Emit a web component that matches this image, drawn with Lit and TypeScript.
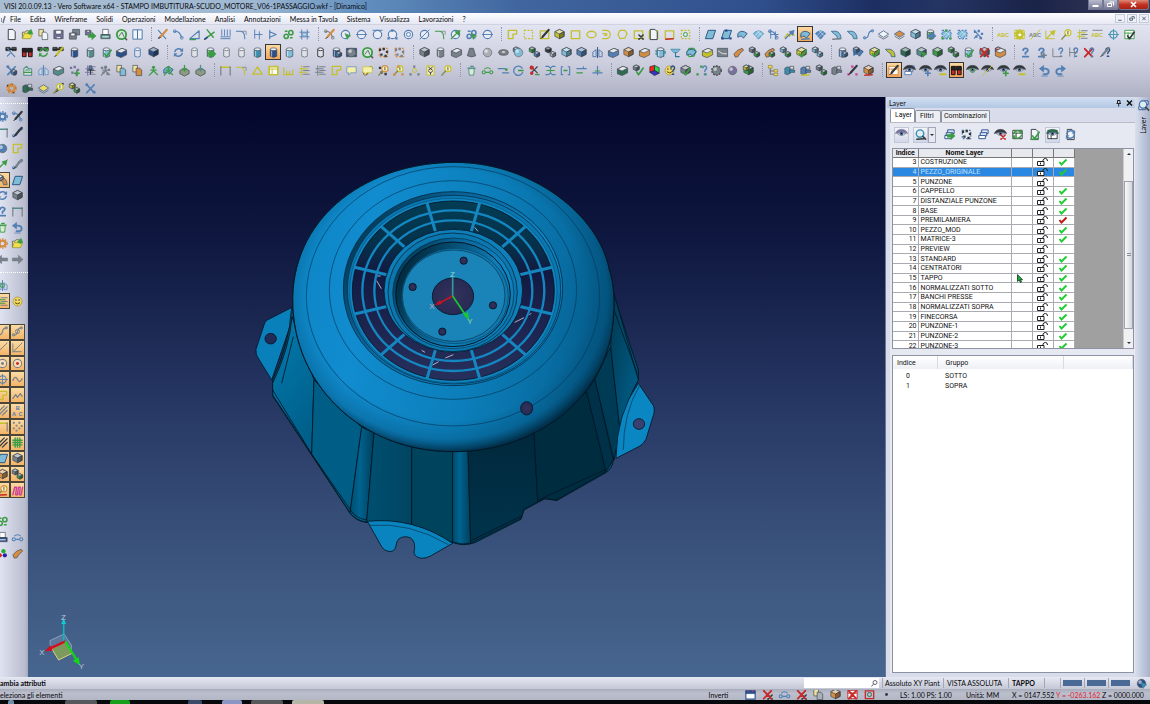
import { LitElement, html, css, svg, nothing } from "lit";
import { customElement, property } from "lit/decorators.js";
import { classMap } from "lit/directives/class-map.js";
import { styleMap } from "lit/directives/style-map.js";

/* ---------- icon vocabulary: "shape/colour" layers joined by "+" ---------- */

const INK: Record<string, string> = {
  b: "#527fb4", B: "#2b4f8a", g: "#3c9c46", G: "#2f6b50", y: "#c3c02c", Y: "#efdc66",
  k: "#33383d", s: "#78818a", S: "#a9b0b6", o: "#d58d42", r: "#c62a2a", c: "#7fbcd8",
  C: "#3a8fae", w: "#f2f5f8", p: "#77719c", t: "#548c88", m: "#cc3f9a",
};

type Draw = (c: string) => unknown;
const line = (d: string, c: string, w = 1.2) =>
  svg`<path d=${d} fill="none" stroke=${c} stroke-width=${w} stroke-linecap="round" stroke-linejoin="round"/>`;
const area = (d: string, f: string, c = "#3c4650", w = 0.7) =>
  svg`<path d=${d} fill=${f} stroke=${c} stroke-width=${w} stroke-linejoin="round"/>`;
const prism = (x: number, y: number, r: number, c: string) => svg`
  ${area(`M${x} ${y}l${r} ${r / 2}v${r}l${-r} ${r / 2}l${-r} ${-r / 2}v${-r}z`, c)}
  ${area(`M${x} ${y}l${r} ${r / 2}l${-r} ${r / 2}l${-r} ${-r / 2}z`, "rgba(255,255,255,.55)")}
  ${area(`M${x} ${y + r}l${r} ${-r / 2}v${r}l${-r} ${r / 2}z`, "rgba(0,0,0,.35)")}`;

const SHAPES: Record<string, Draw> = {
  doc: (c) => area("M3.5 1.5h5l2.500 2.500V12.5h-7.500z", c, "#333a42", 1),
  docs: (c) => svg`${area("M2 1.500h5v7H2z", "#f3e39a")}${area("M5.500 4.500h4l2 2v6h-6z", c)}`,
  folder: (c) => svg`${area("M1.500 11V4.500h3l1-1.500h4v2", "#f6e27a")}${area("M1.500 11.500l2-5.500h9l-2.500 5.500z", "#f1e04e", "#8a8a2a")}${area("M7 5l4-3.500 1.500 4.500-3 1z", c, c)}`,
  floppy: (c) => svg`${area("M2 2.500h10v9H2z", c)}${area("M4 2.500h6v4H4z", "#fff")}${area("M4.500 9h5v2.500h-5z", "#dde")}`,
  disk2: (c) => svg`${area("M5 1.500h7.500v6H5z", c)}${area("M1.500 5.500H9v6.500H1.500z", c)}${area("M3 5.500h4.500v3H3z", "#fff")}`,
  disks: (c) => svg`${area("M1.500 2.500h6v5h-6z", c)}${area("M3 2.500h3v2H3z", "#fff")}`,
  sendR: (c) => area("M4.500 7h4V4.500L13 8.500l-4.500 4V10h-4z", c, c),
  print: (c) => svg`${area("M4 1.500h6V7H4z", "#fff")}${area("M2 7h10v4.500H2z", c)}${line("M4 9.500h6", "#fff", 1)}`,
  lens: (c) => svg`<circle cx="6.500" cy="6" r="4" fill="#dfeef2" stroke=${c} stroke-width="1.500"/>${line("M9.500 9l3 3", "#444", 1.8)}`,
  globe: (c) => svg`<circle cx="7" cy="7" r="5" fill="#d6e8da" stroke=${c} stroke-width="2"/>${line("M4.500 8.500l3-4 2 4.500", "#5a6a70", 1)}${line("M11 11l1.500 1.500", "#555", 1.6)}`,
  book: (c) => svg`${area("M2 2h5v10H2zM7 2h5v10H7z", c, "#4a73a8", 1)}`,
  pencil: (c) => svg`${line("M11.500 2L5 9.500", c, 2.4)}${line("M4.500 10L3 11.500", "#222", 1)}`,
  cross2: (c) => line("M2.500 2.500l8 9M2.500 11l3-3", c, 1.2),
  tools: (c) => svg`${line("M3 3l8 8.500M11 3l-8 8.500", c, 1.8)}<circle cx="3" cy="3" r="1.600" fill=${c}/><circle cx="11" cy="11" r="1.500" fill=${c}/>`,
  arcn: (c) => svg`${line("M2.500 4c5-1 6 2 8 6", c)}<circle cx="3" cy="3.500" r="1.500" fill="none" stroke=${c}/><circle cx="10.500" cy="10.500" r="1.500" fill="none" stroke=${c}/>`,
  tri: (c) => svg`${line("M2 11.500h10V3z", c)}${line("M2 12.500h6", "#35a040", 1.2)}`,
  tri2: (c) => line("M2 11h10L7 3z", c, 1.4),
  arrow: (c) => svg`${line("M2.500 11.500L9 5", c, 1.4)}${area("M12 2.500L10.500 8 6.500 4z", c, c)}`,
  cline: (c) => svg`${line("M2 12L12 4.500M4.500 2l6.500 8", c, 1.5)}${line("M2 12l2.500-2", "#2b4f8a", 1.8)}`,
  arrowR: (c) => svg`${line("M1.500 7h7", c, 1.4)}${area("M8.500 3.500L12.500 7l-4 3.500z", c, c)}`,
  bigL: (c) => area("M1 7l5-4.500V5.500h6.500v3H6v3z", c, c),
  bigR: (c) => area("M13 7L8 2.500V5.500H1.500v3H8v3z", c, c),
  comb: (c) => line("M2 11.500h10M2 9.500h10M3 2v6M6 2v6M9 2v6M12 2v6", c, 1),
  corner: (c) => svg`${line("M1.500 3.500H6q4.500 0 4.500 8", c)}${line("M8 3.500h4V7", "#78818a", 0.8)}`,
  para: (c) => line("M4 2v9M9 4v8M4 7h8", c, 1),
  play: (c) => line("M4 2.500v9M4 4l7 3-7 3", c, 1.2),
  chain: (c) => svg`<g fill="none" stroke=${c} stroke-width="1.700"><circle cx="4.500" cy="9" r="2.300"/><circle cx="9.500" cy="5" r="2.300"/><path d="M3 3.500h3M8.500 10.500h3"/></g>`,
  hatch: (c) => svg`${line("M4 2v10M10 2v10M2 4.500h10M2 9.500h10", c, 1)}${area("M5 5.500h4v3H5z", "#cfe0ee", c)}`,
  circ: (c) => svg`<circle cx="7" cy="7" r="4.500" fill="rgba(255,255,255,.4)" stroke=${c} stroke-width="1.200"/>`,
  circS: (c) => svg`<circle cx="7" cy="7" r="2.200" fill="none" stroke=${c}/>`,
  mid: (c) => line("M1.500 7h11", c, 1),
  top: (c) => line("M2 2.500h10", c, 1),
  slash: (c) => line("M2 12L12 2", c, 1),
  dot: (c) => svg`<circle cx="7" cy="7" r="1.600" fill=${c}/>`,
  nodes: (c) => svg`<g fill=${c}><path d="M1.500 10h2.500v2.500H1.500zM10 10h2.500v2.500H10zM5.500 1.500h2.500v2.500H5.500z"/></g>`,
  sq: (c) => line("M2.500 3h9v8.500h-9z", c, 1.4),
  notch: (c) => line("M2.500 2.500h9v4H7.500v5h-5z", c, 1.4),
  dash: (c) => svg`<rect x="2.500" y="2.500" width="9" height="9" fill="none" stroke=${c} stroke-width="1.300" stroke-dasharray="2 1.500"/>`,
  oval: (c) => svg`<ellipse cx="7" cy="7" rx="5" ry="3.500" fill="none" stroke=${c} stroke-width="1.400"/>`,
  dee: (c) => line("M3 2.500h3.500a4 4 0 010 9H3M3 6h3.500a1 1 0 010 2H5", c, 1.3),
  hex: (c) => line("M4.500 2.500h5L12 6l-2.500 5-5 .500L2 7z", c, 1.3),
  sheet: (c) => area("M4.500 2.500h8l-3 9h-8z", c, "#24507e", 1),
  wave: (c) => area("M2 6q4-5 10 0l-4 5q-2-4-6-1z", c, "#24507e", 0.9),
  fan: (c) => svg`${area("M1.500 6Q7 0 12.500 6L7 12z", c, "#3e84b8", 0.8)}${line("M3.500 8l5-5M5.500 10l5-5M10.500 8l-5-5", "#e4f2fa", 0.7)}`,
  bend: (c) => svg`${area("M1.500 3.500h5q5 1 5.500 8h-4q0-4-3-4.500z", c, "#3d6688", 0.9)}`,
  scurve: (c) => svg`${line("M2.500 11q4 0 4.500-4T11.500 3", c, 1.3)}<circle cx="2.800" cy="10.500" r="1.300" fill="none" stroke=${c}/><circle cx="11.200" cy="3" r="1.300" fill="none" stroke=${c}/>`,
  wiggle: (c) => line("M2 8q2.500-6 5-1t5-1", c, 1.4),
  zig: (c) => line("M2 10l3-4 2 3 3-4 2 3", c, 1.4),
  diam: (c) => svg`${area("M7 3l5.500 3.500L7 10 1.500 6.500z", c, "#48688c", 0.9)}${line("M2 9l5 3 5-3", "#6a7682", 1)}`,
  cube: (c) => prism(7, 1.5, 5, c),
  cubeS: (c) => prism(9.5, 6, 3, c),
  cubeT: (c) => prism(4.5, 1, 3.2, c),
  cyl: (c) => svg`${area("M3.500 3.500v7.500q3.500 2.500 7 0v-7.500z", c)}<path d="M5 4.500v7" stroke="rgba(255,255,255,.6)"/><ellipse cx="7" cy="3.500" rx="3.500" ry="1.500" fill="#e8eef4" stroke="#3c4650" stroke-width=".7"/>`,
  cylo: (c) => svg`<path d="M4 3.500v7.500q3 2 6 0v-7.500" fill="#dfe3e9" stroke=${c}/><ellipse cx="7" cy="3.500" rx="3" ry="1.500" fill="#f1f3f6" stroke=${c}/>`,
  cone: (c) => area("M5 2.500h4l2.500 8q-4.500 2.500-9 0z", c),
  ball: (c) => svg`<circle cx="7" cy="7" r="4.600" fill=${c} stroke="#555" stroke-width=".6"/><circle cx="5.500" cy="5.500" r="2" fill="#fff" opacity=".55"/>`,
  torus: (c) => svg`<ellipse cx="7" cy="7" rx="5.200" ry="3" fill=${c} stroke="#444" stroke-width=".7"/><ellipse cx="7" cy="6.500" rx="2" ry=".8" fill="#eee"/>`,
  glass: (c) => svg`${area("M1 1.500h4.500v3.500H1zM7.500 1.500H12v3.500H7.500z", c, "#222", 0.9)}${line("M1.500 3.500h10", "#222", 1.6)}`,
  bino: (c) => svg`${area("M1.500 3H5.500v8.500h-4zM8 3h4v8.500H8z", c, "#111", 1)}${area("M1.500 2.500h10.500v4H1.500z", "#222", "#111")}`,
  plus: (c) => line("M9.500 7.500v5M7 10h5", c, 1.8),
  minus: (c) => line("M6.500 11h6", c, 2),
  ex: (c) => line("M3 3l8 8.500M11 3l-8 8.500", c, 2),
  exS: (c) => line("M7.500 7.500l4.500 4.500M12 7.500L7.500 12", c, 1.6),
  check: (c) => line("M5 8.500l2 3 5-7", c, 1.8),
  tip: (c) => area("M6.500 6l6 2.500-2.500.8-1 3z", c, c),
  under: (c) => line("M3 12l8-.500", c, 1.6),
  refresh: (c) => svg`${line("M11 5A4.500 4.500 0 003 6M3 9a4.500 4.500 0 008-1", c, 1.6)}${area("M11.800 2.500V6H8.500zM2.200 11.500V8h3.300z", c, c, 0.3)}`,
  gear: (c) => svg`<circle cx="7" cy="7" r="3.200" fill="none" stroke=${c} stroke-width="2.400"/><circle cx="7" cy="7" r="5" fill="none" stroke=${c} stroke-width="1.500" stroke-dasharray="1.700 1.500"/>`,
  pic: (c) => svg`${area("M1.500 2.500h11v9h-11z", c)}${line("M2.500 5.500q4 4 9 3", "#f0f0f0", 0.9)}`,
  block: (c) => svg`${area("M1.500 5.500l6-3 5 2v5l-6 3-5-2z", c)}${area("M1.500 5.500l6-3 5 2-6 3z", "#e6e8ea")}`,
  hand: (c) => area("M2 8.500l4-4 5-2 1.500 2-4 3.500-2 3.500-3 .5z", c),
  flag: (c) => svg`${area("M2 3.500h10l-3 3.500H5z", c, "#2a7a9a")}${line("M7 7v4.500h4", "#2a7a9a")}`,
  quest: (c) => svg`${line("M4.500 4.500a2.500 2 0 115 0q0 1.500-2.500 2.500v1.500", c, 2)}${line("M4 11.500h6", c, 1.8)}`,
  axes: (c) => line("M2 3v8.500h9", c, 1),
  mirror: (c) => svg`${line("M7 1.500v11", c, 1)}${area("M5.500 4L2 6.500v5h3.500zM8.500 4L12 6.500v5H8.500z", "#c7d6e4", c)}`,
  house: (c) => svg`${area("M3 12V5l3-2.500L8 5h3.500v7z", "#d3dde4", c, 1.1)}${line("M3 9h8M5 6.500h4", "#3c9c46", 1.2)}`,
  bits: (c) => svg`<g fill=${c}><path d="M2 3h2.500v2.500H2zM6 2h2.500v2.500H6zM9.500 5H12v2.500H9.500zM3.500 8H6v2.500H3.500zM8 9.500h2.500V12H8z"/></g>`,
  person: (c) => svg`<circle cx="7" cy="3.500" r="1.700" fill=${c}/>${line("M2.500 12L7 7.500l4.500 4M4 6.500h6M7 5v3", c, 1.3)}`,
  crate: (c) => svg`${area("M2 7l5-2.500L12 7v3.500L7 13l-5-2.500z", "#8d9a86", "#39443a")}${line("M7 1.500V7M5 5l2 2.500L9 5", c, 1.4)}`,
  dim: (c) => svg`${line("M2 3.500h10", c, 1.4)}${line("M2 3v9M12 3v9", "#5f6a72", 1)}`,
  rule: (c) => line("M2 4v7.500h10M5 11V8M8 11V8M11.500 11V6", c, 1.2),
  lines: (c) => svg`${line("M6 3h6M6 7h6M6 11h6", "#78818a", 1.2)}${line("M4 2v10M2 5h8M1.500 9h8", c, 1.1)}`,
  note: (c) => svg`${area("M2 3h10v6.500H6L4 12V9.500H2z", "#f4efab", c)}`,
  tag: (c) => svg`${area("M3 2h8v10H3z", "#eeeac0", c, 1)}${line("M5 3.500l4 3M9 3.500l-4 3M5 8l2 1.500L9 8M7 9.500V11", "#333", 1)}`,
  abc: (c) => svg`<text x="0" y="10" font-family="Liberation Sans" font-weight="700" font-size="6" fill=${c}>ABC</text>`,
  keyhole: (c) => svg`<circle cx="8.500" cy="5" r="3.300" fill="#f5f0b4" stroke=${c} stroke-width="1.200"/>${line("M6 7.500l-4 4.500", "#8a8a4a", 1.5)}${line("M8.500 3.500v3", "#555", 1)}`,
  target: (c) => svg`<circle cx="7" cy="7" r="4" fill="none" stroke=${c} stroke-width="1.200"/>${line("M7 1.500v11M1.500 7h11", c, 0.9)}`,
  can: (c) => svg`${area("M4 5h6l-.6 7H4.600z", "#d8ecd8", c, 1)}${line("M3 4.500h8M6 2.500h3", c, 1.2)}`,
  links: (c) => svg`<g fill="none" stroke=${c} stroke-width="1.200"><circle cx="3" cy="9" r="1.700"/><circle cx="11" cy="9" r="1.700"/><path d="M3.500 5.500q3.500-3 7 0M5 9h4"/></g>`,
  dashes: (c) => svg`${line("M1.500 5h7M6 9.5h6.500", c, 1.4)}<circle cx="10" cy="6" r="1.500" fill="#3c9c46"/>`,
  clock: (c) => svg`${line("M11 4.500A5 5 0 1011.500 9", c, 1.400)}${line("M7 7h5", "#3c9c46", 1.4)}`,
  cut: (c) => svg`${line("M3 2.500l7 7M10 3L4 9", "#444", 1.3)}<circle cx="4" cy="4" r="2.300" fill=${c}/><circle cx="4" cy="10" r="1.800" fill=${c}/>${line("M8 11.500h4", "#3c9c46", 1.3)}`,
  press: (c) => svg`${line("M2 2.500h3l2 2 2-2h3M2 11.500h3l2-2 2 2h3", c, 1.2)}${line("M3 7h8M7 5v4", "#3c9c46", 1.2)}`,
  gate: (c) => svg`${line("M2.500 3v8.500M11.500 3v8.500M2.500 3h1.500M10 3h1.500M2.500 11.500H4M10 11.500h1.500", c)}${line("M5.500 7h3", "#3c9c46", 1.8)}`,
  split: (c) => svg`${line("M2 5h10M9 3v2", c, 1.2)}${line("M2 9.500h6", "#3c9c46", 1.3)}`,
  post: (c) => svg`${line("M2 9.500h10M7 2.500v9", c, 1.2)}${line("M4.500 7.500h5", "#3c9c46", 1.2)}`,
  face: (c) => svg`<circle cx="7" cy="7" r="4.800" fill=${c} stroke="#a07b10" stroke-width=".6"/><circle cx="5.300" cy="5.500" r=".8" fill="#333"/><circle cx="8.700" cy="5.500" r=".8" fill="#333"/>${line("M4.500 8.500q2.500 2.500 5 0", "#5a3b00", 1)}`,
  questS: (c) => svg`${line("M8.500 4a2 2 0 113.500 1.500q-1.500 1-1.500 2.500", c, 1.5)}${line("M10 11h1.500", c, 1.5)}`,
  rgb: () => svg`<circle cx="4" cy="9" r="2.300" fill="#d22"/><circle cx="9.500" cy="9" r="2.300" fill="#22a"/><circle cx="8" cy="4.500" r="2.300" fill="#2a3"/>`,
  rainbow: () => svg`${area("M2 3l5-1.500V7l-5 2z", "#f22", "#222")}${area("M7 1.500L12 4v6L7 7z", "#2d4", "#222")}${area("M2 9l5-2 5 3-5 2.500z", "#33c", "#222")}`,
  tree: (c) => svg`${line("M3.500 4v7h4M3.500 7.500h4", "#666", 1)}${area("M1.500 1.500h4v3h-4zM7.500 6h4v2.500h-4zM7.500 10h4v2.500h-4z", c, "#8a7a2a")}`,
  valve: (c) => svg`${area("M2 4.500l3-1.500 3 1v6l-3 1.500-3-1z", c)}${area("M7.500 2.500h4v3h-4z", "#d8dde2")}${area("M7 6.500h5.500v2.500H7z", c)}`,
  eye: (c) => svg`${area("M.500 6Q2 1.500 7 1.500T13.500 6Q11 4.500 7 4.500T.500 6z", c, c)}${area("M2.500 6q4.500-2.500 9 0-4.500 4-9 0z", "#eef2f8", "#555", 0.6)}<circle cx="7" cy="6" r="2" fill="#46699a"/><circle cx="7" cy="6" r=".8" fill="#111"/>`,
  undo: (c) => svg`${line("M6 11h3q2.500-.5 2.500-3T8 5H5.500", c, 2)}${area("M6 1.500v7L1.500 5z", c, c)}${line("M4 13h6", c, 0.8)}`,
  redo: (c) => svg`${line("M8 11H5Q2.500 10.500 2.500 8t3.500-3h2.500", c, 2)}${area("M8 1.500v7L12.500 5z", c, c)}${line("M4 13h6", c, 0.8)}`,
  diag: (c) => line("M2 9l7-7M3 12l9-9M7 12l5-5", c, 1.3),
  pts: (c) => svg`<g fill=${c}><path d="M2 2h2v2H2zM8 2h2v2H8zM5 5h2v2H5zM10.500 5.500h2v2h-2zM2 8h2v2H2zM8 8h2v2H8zM5 10.500h2v2H5z"/></g>`,
  mesh: (c) => svg`${line("M2 4.500h10M2 7h10M2 9.500h10M4.500 2v10M7 2v10M9.500 2v10", c, 1.5)}`,
  coil: (c) => line("M2 11.500l2-8h2l-1 8h2l1-8h2l-1 8h2l1.500-8", c, 1.5),
  letters: (c) => svg`<g font-family="Liberation Sans" font-weight="700" font-size="6" fill=${c}><text x="5" y="6">B</text><text x="1" y="12.500">A</text><text x="8" y="12.500">C</text></g>`,
  cell: (c) => svg`${area("M2 2.500h10v9H2z", "#fdfdfd", c, 1)}${line("M2 5.500h10M5.500 5.500v6", c, 1)}`,
  cal: (c) => svg`${area("M2 3h10v9H2z", "#fdfdfd", c, 1.2)}${area("M2 3h10v3H2z", c, c)}${line("M4.500 1.500v2M9.500 1.500v2", "#c0476a", 1.2)}`,
  pin: (c) => svg`${area("M5.500 2h3v4.500h-3z", c)}${line("M4 6.500h6M7 6.500V11", "#333", 1)}`,
  stack: (c) => svg`${area("M5 2h7v4H5z", "#dfe6ff", c, 1)}${area("M3.500 5h7v3.500h-7z", "#dfe6ff", c, 1)}${area("M2 8h7v3.500H2z", "#fff", c, 1)}`,
};

const drawIcon = (code: string) => svg`${code.split("+").map((part) => {
  const [name, ink] = part.split("/");
  const draw = SHAPES[name];
  return draw ? draw(INK[ink] ?? INK.s) : nothing;
})}`;

@customElement("tool-icon")
class ToolIcon extends LitElement {
  static styles = css`
    :host { display: inline-flex; width: 13px; height: 13px; flex: none; }
    svg { width: 13px; height: 13px; display: block; }
  `;
  @property() code = "";
  render() {
    return html`<svg viewBox="0 0 14 14" aria-hidden="true">${drawIcon(this.code)}</svg>`;
  }
}

/* ---------- toolbar data; a leading "!" marks a pressed tool ---------- */

const TOOLBARS: string[][] = [
  [
    "doc/w folder/g docs/w floppy/p disk2/s disks/p+sendR/g print/t globe/g book/w",
    "cross2/b+pencil/o arcn/b tri/b cline/g comb/b corner/b para/b play/b chain/g hatch/b",
    "arcn/s+pencil/o circ/b+tip/g circ/b+mid/b circ/b+top/b circ/b+nodes/b circ/b+circS/b circ/b+slash/b corner/g circ/b+arrow/g chain/b+tip/g circ/b+mid/b",
    "notch/y dash/y sq/y+pencil/k cube/y sq/y oval/y dee/y hex/y sq/y+exS/k sq/y+doc/w sq/y+under/r dash/y+circS/g",
    "sheet/c sheet/c+nodes/B wave/c fan/c para/b+arcn/b zig/y+arrow/b !wave/c+under/b fan/b bend/c+under/s bend/c scurve/b diam/w diam/o cube/c cyl/g+sendR/b dash/b+fan/c+nodes/g dash/b+fan/c bits/b+cross2/b",
    "abc/y cell/y+gear/y abc/s+slash/y axes/y+arrow/y keyhole/y lines/y abc/y+top/s target/C cell/g+check/k",
  ],
  [
    "glass/s+cross2/b bino/r glass/s+refresh/g glass/s+pencil/y cyl/B cyl/t cyl/c+check/g block/B cylo/b cube/B",
    "refresh/b cylo/s cyl/g+sendR/g cylo/s cylo/s cyl/C !cyl/B cyl/c cylo/s cylo/k cyl/B+cubeS/b pic/B+ball/s globe/g dash/o+bits/k dash/o+bits/s",
    "cube/s cyl/s block/s cone/s ball/S torus/s cubeT/b+ball/c cubeT/g+cubeS/b cubeT/k+cubeS/S cube/c cube/b mirror/B block/b cube/o block/o gear/C+cyl/c flag/c hex/g+wave/c block/y pic/s hand/o cubeT/s+cubeS/g hand/o+cubeS/g cubeT/c+cubeS/g cube/y+check/g cubeT/c+cubeS/c",
    "cyl/b+cubeS/b wave/b+cubeT/b cube/y+check/g bend/y cube/G cube/t+tip/g cube/g cubeT/g+cubeS/g cyl/c+check/g cube/s+ex/r cubeT/r+block/o",
    "quest/b quest/b+plus/s questS/b+axes/s questS/b+para/s ex/r+questS/b questS/B+pencil/s",
  ],
  [
    "tools/b+cubeS/b house/t mirror/b block/t bits/p+plus/g lines/p+pin/b bits/s+person/s docs/c docs/o person/g wave/c+person/g crate/g crate/t",
    "dim/y corner/y tri2/y cell/y+sq/y rule/y lines/y lines/s notch/y note/b hand/o+note/y bits/k+keyhole/o keyhole/y+nodes/o circS/y+nodes/s tag/y keyhole/y",
    "can/t links/g dashes/b clock/b cut/r press/b gate/b split/b post/b",
    "block/G cubeT/s+check/g rainbow/k face/Y+questS/B cube/s+check/g nodes/g+questS/b gear/k+ball/s ball/p cube/g+cubeT/y",
    "tree/Y valve/C valve/b+under/y cubeT/s+cubeS/g valve/s nodes/m+pencil/k cube/o+under/r",
    "!cell/o+pencil/k stack/b+eye/k eye/k+plus/b eye/k+minus/y !bino/r eye/k+circS/g eye/k+slash/y eye/k+plus/g eye/k+minus/y",
    "undo/b redo/b",
  ],
  ["bits/k+gear/o valve/G diam/Y pencil/k+keyhole/y cubeT/y+cubeS/g tools/b"],
];

const PITCH = 15.7;

@customElement("tool-strip")
class ToolStrip extends LitElement {
  static styles = css`
    :host { display: flex; height: 18px; padding-left: 4px; min-width: 0; }
    .group { display: flex; justify-content: space-between; flex: none; }
    .sep { flex: none; width: 10px; display: flex; justify-content: center; padding-left: 3px; box-sizing: border-box; }
    .sep i { width: 0; border-left: 1px dotted #8f96a8; margin: 2px 0; }
    button { flex: 1 1 0; min-width: 0; display: flex; align-items: center; justify-content: center;
      padding: 0; border: 1px solid transparent; background: none; height: 16px; margin-top: 1px; }
    .on { background: linear-gradient(#fbd9a0, #f2a65a); border-color: #33363c; }
  `;
  @property({ attribute: false }) groups: string[] = [];
  render() {
    return this.groups.map((g, gi) => {
      const items = g.split(" ");
      return html`${gi ? html`<span class="sep"><i></i></span>` : nothing}
        <div class="group" role="toolbar" style=${styleMap({ width: `${Math.round(items.length * PITCH)}px` })}>
          ${items.map((c, i) => html`<button class=${classMap({ on: c[0] === "!" })} aria-label=${`Comando ${gi + 1}.${i + 1}`}>
            <tool-icon code=${c.replace("!", "")}></tool-icon></button>`)}
        </div>`;
    });
  }
}

/* ---------- left palette: pairs of tools, "-" leaves a slot blank ---------- */

const PALETTE: { items: string[]; framed?: boolean; cls: string }[] = [
  { cls: "first", items: ["gear/b arcn/b+pencil/k", "dim/t scurve/b+pencil/k", "ball/b notch/y", "slash/r+arrow/g scurve/b+pencil/s",
      "!bend/o+cubeT/w sheet/c", "refresh/b cube/s", "quest/b dim/t", "can/g undo/b", "gear/o folder/g", "bigL/s bigR/s"] },
  { cls: "second", items: ["mirror/b+circS/g -", "!lines/g face/Y"] },
  { cls: "third", framed: true, items: ["scurve/s circS/s+scurve/s", "slash/s axes/s+slash/s", "circ/s+dot/s circ/s+dot/r", "target/b wiggle/s", "notch/y zig/s",
      "diag/s letters/b", "dim/y pts/s", "diag/k mesh/g", "sheet/c cube/s", "cube/o cubeT/s+cubeS/g", "keyhole/o+under/r coil/m"] },
  { cls: "fourth", items: ["chain/g -", "print/B links/b", "rgb/k hand/o"] },
];

@customElement("side-palette")
class SidePalette extends LitElement {
  static styles = css`
    :host { display: flex; flex-direction: column; width: 28px; flex: none; overflow: hidden;
      background: linear-gradient(90deg, #dfe2f0, #b9bccd 90%, #a6a9bc); }
    .block { display: grid; grid-template-columns: 15px 15px; justify-content: end; padding-right: 3px; }
    .first { height: 158px; margin-top: 6px; padding-top: 5px; border-top: 1px dotted #fff; }
    .second { height: 32px; border-top: 1px dotted #fff; margin-top: 5px; padding-top: 4px; }
    .third { height: 174px; margin-top: 15px; }
    .fourth { height: 48px; margin-top: 15px; }
    button { padding: 0; min-height: 0; min-width: 0; display: flex; align-items: center; justify-content: center;
      border: 1px solid transparent; background: none; overflow: hidden; }
    .on { background: linear-gradient(#fbdba4, #f3b468); border-color: #4c4638; }
  `;
  render() {
    return PALETTE.map((b) => html`<div class="block ${b.cls}" role="toolbar">
      ${b.items.flatMap((row) => row.split(" ")).map((c, i) => c === "-" ? html`<span></span>` :
        html`<button class=${classMap({ on: !!b.framed || c[0] === "!" })} aria-label=${`Attributo ${i + 1}`}>
          <tool-icon code=${c.replace("!", "")}></tool-icon></button>`)}
    </div>`);
  }
}

/* ---------- 3D scene ---------- */

const SPOKES = Array.from({ length: 12 }, (_, i) => {
  const a = ((15 + i * 30) * Math.PI) / 180;
  return `M${Math.round(640 + 200 * Math.cos(a))} ${Math.round(422 + 178 * Math.sin(a))}L${Math.round(640 + 306 * Math.cos(a))} ${Math.round(422 + 272 * Math.sin(a))}`;
}).join("");

@customElement("model-view")
class ModelView extends LitElement {
  static styles = css`
    :host { display: block; flex: 1 1 0; min-width: 0; overflow: hidden;
      background: linear-gradient(#03052a, #0f1840 25%, #243460 50%, #385079 75%, #47668f); }
    svg { display: block; width: 100%; height: 100%; font-family: "Liberation Sans", sans-serif; }
  `;
  render() {
    return html`<svg viewBox="28 97 857 580" role="img" aria-label="Scudo motore">
      <defs>
        <linearGradient id="dome" x1="0" y1="0.5" x2="1" y2="0.65">
          <stop offset="0" stop-color="#0d86c6"/><stop offset=".2" stop-color="#118ccf"/><stop offset=".55" stop-color="#0c7fbb"/><stop offset=".8" stop-color="#086ea4"/><stop offset="1" stop-color="#045580"/>
        </linearGradient>
        <radialGradient id="edge" cx=".48" cy=".46" r=".54">
          <stop offset=".8" stop-color="#013a58" stop-opacity="0"/><stop offset=".92" stop-color="#01456a" stop-opacity=".3"/><stop offset="1" stop-color="#012a42" stop-opacity=".9"/>
        </radialGradient>
        <linearGradient id="slot" x1="0" y1="0" x2="0" y2="1">
          <stop offset="0" stop-color="#023d54"/><stop offset=".25" stop-color="#06304a"/><stop offset=".4" stop-color="#131a42"/><stop offset="1" stop-color="#272f5c"/>
        </linearGradient>
        <linearGradient id="ring" x1="0" y1=".2" x2="1" y2=".8">
          <stop offset="0" stop-color="#02324a"/><stop offset=".3" stop-color="#0a6296"/><stop offset=".7" stop-color="#1286c4"/><stop offset="1" stop-color="#0b78b2"/>
        </linearGradient>
        <linearGradient id="well" x1="0" y1=".2" x2="1" y2=".7">
          <stop offset="0" stop-color="#01202f"/><stop offset=".3" stop-color="#05496c"/><stop offset=".7" stop-color="#0f7fba"/><stop offset="1" stop-color="#0d74ac"/>
        </linearGradient>
        <linearGradient id="side" x1="0" y1="0" x2=".4" y2="1"><stop offset="0" stop-color="#037bb0"/><stop offset="1" stop-color="#00608b"/></linearGradient>
        <linearGradient id="front" x1="0" y1="0" x2="1" y2="0"><stop offset="0" stop-color="#004f70"/><stop offset="1" stop-color="#004562"/></linearGradient>
        <linearGradient id="rib" x1="0" y1="0" x2="1" y2="0"><stop offset="0" stop-color="#004c6e"/><stop offset=".4" stop-color="#006390"/><stop offset="1" stop-color="#003f5b"/></linearGradient>
        <linearGradient id="right" x1="0" y1="0" x2="0" y2="1"><stop offset="0" stop-color="#01283c"/><stop offset="1" stop-color="#00344b"/></linearGradient>
        <linearGradient id="rear" x1="0" y1="0" x2="1" y2="1"><stop offset="0" stop-color="#023850"/><stop offset="1" stop-color="#00638f"/></linearGradient>
        <radialGradient id="pierce"><stop offset="0" stop-color="#33335c"/><stop offset="1" stop-color="#282a54"/></radialGradient>
      </defs>
      <g transform="translate(240 150) scale(.33333)" stroke="#021624" stroke-width="2.500" stroke-linejoin="round">
        <path d="M154 473L82 510Q75 514 73 522L48 598Q47 610 52 620L95 690L160 500Z" fill="#0a80bb"/>
        <path d="M154 480Q148 580 98 690V738L330 1090Q350 1115 380 1117L640 1178Q670 1190 705 1178L843 1108L852 1080L915 1046L950 1052L1098 968Q1118 955 1120 930L1150 820Q1165 740 1195 690V660L1120 430L640 400Z" fill="#00506f"/>
        <path d="M156 500Q150 590 98 700V735L215 912L222 690Z" fill="url(#side)"/>
        <path d="M222 690L215 912L330 1088L365 832Z" fill="#005e86"/>
        <path d="M365 832L330 1088Q345 1110 380 1117L402 848Z" fill="url(#rib)"/>
        <path d="M402 848L380 1115Q450 1118 515 1142V888Z" fill="url(#front)"/>
        <path d="M515 888V1142Q580 1152 638 1178V900Z" fill="#00435d"/>
        <path d="M638 900V1176Q665 1186 692 1180L684 896Z" fill="url(#rib)"/>
        <path d="M684 896L692 1180L843 1106L852 1078L893 1055L882 848Z" fill="url(#right)"/>
        <path d="M882 848L893 1055L915 1046L950 1050L1098 965L1040 725Z" fill="#002c40"/>
        <path d="M1040 725L1098 965L1120 930L1065 688Z" fill="#003149"/>
        <path d="M1065 688L1122 930L1140 840L1112 590Z" fill="#003b56"/>
        <path d="M1112 590L1140 840Q1155 760 1195 690L1122 430Z" fill="url(#rear)"/>
        <path d="M98 720L215 912L335 1085Q350 1105 380 1110M692 1172L845 1098M895 1050L1098 958M125 700L160 560M1122 480L1192 672" fill="none"/>
        <path d="M1195 700L1241 768Q1244 778 1242 790L1218 868Q1212 880 1200 888L1128 925Q1130 790 1195 700Z" fill="#0a86c2"/>
        <path d="M1150 900Q1150 790 1198 708" fill="none" stroke-width="1.500"/>
        <path d="M382 1114Q520 1100 638 1180L570 1219Q545 1230 530 1220Q518 1212 524 1196Q526 1162 498 1160Q470 1160 468 1188Q464 1208 444 1204Q432 1200 426 1192Z" fill="#0a84be"/>
        <path d="M390 1126Q510 1116 625 1184" fill="none" stroke-width="1.500"/>
        <ellipse cx="92" cy="566" rx="17" ry="16" fill="#222a58"/>
        <ellipse cx="1197" cy="822" rx="17" ry="16" fill="#3a4170"/>

        <path d="M158 440C165 190 390 37 645 37C880 37 1080 200 1108 360C1122 400 1124 450 1121 490C1114 730 900 905 640 905C380 905 190 730 162 510Q157 475 158 440Z" fill="url(#dome)"/>
        <path d="M158 440C165 190 390 37 645 37C880 37 1080 200 1108 360C1122 400 1124 450 1121 490C1114 730 900 905 640 905C380 905 190 730 162 510Q157 475 158 440Z" fill="url(#edge)"/>
        <g fill="none" stroke="#03385a" stroke-width="2">
          <ellipse cx="639" cy="439" rx="440" ry="389"/><ellipse cx="639" cy="420" rx="371" ry="328"/>
        </g>
        <ellipse cx="639" cy="416" rx="329" ry="291" fill="url(#ring)" stroke="#032c46"/>
        <ellipse cx="642" cy="419" rx="320" ry="283" fill="#0a77b0" stroke="#033453"/>
        <ellipse cx="640" cy="422" rx="311" ry="277" fill="#1184c0" stroke="#03466b" stroke-width="1.500"/>
        <ellipse cx="640" cy="422" rx="303" ry="269" fill="url(#slot)"/>
        <g fill="none" stroke="#1486c0" stroke-width="7">
          <ellipse cx="640" cy="422" rx="273" ry="241"/><ellipse cx="640" cy="422" rx="237" ry="211"/>
          <path d=${SPOKES} stroke-width="9"/>
        </g>
        <ellipse cx="640" cy="422" rx="208" ry="184" fill="#0f7fba"/>
        <ellipse cx="638" cy="427" rx="194" ry="178" fill="#0c77af" stroke-width="2"/>
        <ellipse cx="640" cy="430" rx="182" ry="166" fill="url(#ring)" stroke="#02304a" stroke-width="2"/>
        <ellipse cx="639" cy="433" rx="172" ry="157" fill="url(#well)" stroke-width="3"/>
        <ellipse cx="645" cy="438" rx="160" ry="143" fill="#1178ae" stroke="#02304a" stroke-width="1.500"/>
        <ellipse cx="641" cy="437" rx="154" ry="137" fill="#1a84b8" stroke-width="1.500"/>
        <g fill="url(#pierce)">
          <ellipse cx="639" cy="439" rx="62" ry="55"/>
          <circle cx="671" cy="332" r="11"/><circle cx="518" cy="411" r="11"/><circle cx="759" cy="466" r="11"/><circle cx="607" cy="545" r="11"/>
          <ellipse cx="860" cy="775" rx="18" ry="20"/>
        </g>
        <path d="M412 378h10M410 392l14 24M704 232l10 12M824 517l28-14M868 494l6-4M545 601l10 6M578 645l18-10M616 624l24-10" stroke="#c9cdd8" fill="none"/>
        <path d="M638 438V374" stroke="#2f9c9c" stroke-width="5"/>
        <path d="M638 438L600 458" stroke="#c01424" stroke-width="5"/><path d="M584 466L600 450L606 462Z" fill="#c01424" stroke="none"/>
        <path d="M638 438L680 500" stroke="#19c832" stroke-width="5"/><path d="M688 512L670 494L684 486Z" fill="#19c832" stroke="none"/>
        <g fill="#8fd0dc" stroke="none" font-size="24"><text x="630" y="380">Z</text><text x="568" y="478" fill="#c9a4b8">X</text><text x="682" y="522" fill="#9ad4b0">Y</text></g>
      </g>
      <g transform="translate(0 600) scale(.33333)">
        <path d="M150 122L192 102L214 135V158L152 150Z" fill="#8fa0bc" fill-opacity=".35" stroke="#9aa9c4" stroke-width="2.500"/>
        <path d="M155 146L196 126L216 160L176 180Z" fill="#7d9a5e" stroke="#d9d27a" stroke-width="3"/>
        <path d="M191 125V66" stroke="#10b4bc" stroke-width="5"/><path d="M191 54L184 72H198Z" fill="#12ccd0"/>
        <path d="M196 124L150 146" stroke="#d01020" stroke-width="7"/><path d="M134 154L152 136L158 152Z" fill="#d01020"/>
        <path d="M196 124L230 180" stroke="#12d41c" stroke-width="7"/><path d="M240 196L218 182L236 172Z" fill="#12d41c"/>
        <g fill="#b9c4d6" font-size="24"><text x="183" y="60">Z</text><text x="118" y="165">X</text><text x="236" y="208">Y</text></g>
      </g>
    </svg>`;
  }
}

/* ---------- layer panel ---------- */

const LAYERS: [number, string, string][] = [
  [3, "COSTRUZIONE", "g"], [4, "PEZZO_ORIGINALE", "g"], [5, "PUNZONE", ""], [6, "CAPPELLO", "g"], [7, "DISTANZIALE PUNZONE", "g"],
  [8, "BASE", "g"], [9, "PREMILAMIERA", "r"], [10, "PEZZO_MOD", "g"], [11, "MATRICE-3", "g"], [12, "PREVIEW", ""], [13, "STANDARD", "g"],
  [14, "CENTRATORI", "g"], [15, "TAPPO", "g"], [16, "NORMALIZZATI SOTTO", "g"], [17, "BANCHI PRESSE", "g"],
  [18, "NORMALIZZATI SOPRA", "g"], [19, "FINECORSA", "g"], [20, "PUNZONE-1", "g"], [21, "PUNZONE-2", "g"], [22, "PUNZONE-3", "g"],
];

@customElement("layer-panel")
class LayerPanel extends LitElement {
  static styles = css`
    :host { display: flex; flex-direction: column; width: 251px; flex: none; box-sizing: border-box; padding: 1px 1px 4px 4px;
      background: #d9dcea; border-left: 1px solid #6d7790; font: 7px/9px Roboto, "Liberation Sans", sans-serif; color: #111; }
    .caption { display: flex; align-items: center; height: 10px; margin: 0 0 0 -3px; padding: 0 2px; gap: 4px;
      background: linear-gradient(#cddcf0, #b4c8e4); font: 7px/9px Lato, sans-serif; }
    .caption span { flex: 1; }
    .caption button { width: 7px; height: 8px; padding: 0; border: 0; background: none; display: flex; }
    .caption svg { width: 7px; height: 8px; }
    .tabs { display: flex; align-items: flex-end; height: 14px; border-bottom: 1px solid #b9bcc6; }
    .tabs button { font: inherit; color: inherit; height: 12px; padding: 0 4px; border: 1px solid #8d92a2; border-bottom: 0;
      border-radius: 2px 2px 0 0; background: #eceef4; text-align: left; }
    .tabs .t0 { height: 14px; width: 25px; background: #fff; }
    .tabs .t1 { width: 26px; }
    .tabs .t2 { padding: 0 2px; }
    .body { flex: 1; min-height: 0; display: flex; flex-direction: column; background: #e6e8f2; padding: 0 1px 0 2px; }
    .bar { display: flex; align-items: center; height: 23px; flex: none; padding: 0 2px; gap: 4px; margin-bottom: 2px; }
    .bar button { padding: 0; width: 13px; height: 16px; display: flex; align-items: center; justify-content: center; border: 0; background: none; }
    .bar .raised { background: linear-gradient(#f3f5fb, #d2d8e8); border: 1px solid #c3c8d8; width: 15px; box-sizing: border-box; }
    .bar .drop { width: 8px; margin-left: -4px; margin-right: 3px; border: 1px solid #a3a8b8; box-sizing: border-box; }
    .tablebox { display: flex; height: 201px; flex: none; overflow: hidden; background: #a0a0a0; border: 1px solid #8d92a2; box-sizing: border-box; }
    .scroll { flex: 1; overflow: hidden; }
    table { border-collapse: collapse; table-layout: fixed; width: 181px; height: 202px; background: #fff; }
    th, td { padding: 0; border: 1px solid #a9abb0; border-width: 0 1px 1px 0; overflow: hidden; white-space: nowrap; line-height: 8px; height: 8px; }
    th { background: #e8e9ee; font-weight: 700; font-size: 7px; border-color: #777; }
    td:first-child { text-align: right; padding-right: 1px; }
    td:nth-child(2) { padding-left: 2px; }
    .sel td { background: #2a88e2; color: #bfe0ff; }
    .ic { text-align: center; }
    .ic svg { display: block; margin: 0 auto; width: 11px; height: 8px; }
    .pick { position: relative; overflow: visible; }
    .cursor { position: absolute; left: 5px; top: 0; width: 6px; height: 9px; }
    .sb { width: 10px; flex: none; display: flex; flex-direction: column; background: #f0f0f2; border-left: 1px solid #c8cad2; box-sizing: border-box; }
    .sb button { border: 0; padding: 0; height: 10px; width: 100%; background: #eef0f4; display: flex; align-items: center; justify-content: center; }
    .track { flex: 1; padding-top: 22px; padding-bottom: 9px; }
    .thumb { height: 100%; box-sizing: border-box; border: 1px solid #9da2ac; background: linear-gradient(90deg, #fafafa, #d4d6dc); display: flex; align-items: center; justify-content: center; }
    .tri { width: 0; height: 0; border: 2px solid transparent; }
    .dn { border-top-color: #333; margin-top: 2px; }
    .up { border-bottom-color: #333; margin-bottom: 2px; }
    .grip { width: 4px; height: 4px; background: repeating-linear-gradient(#8a8f9a 0 1px, transparent 1px 2px); }
    .list { flex: 1; min-height: 0; margin-top: 6px; background: #fff; border: 1px solid #8d92a2; }
    .list table { width: 100%; height: auto; }
    .list th { text-align: left; font-weight: 400; border: 0; border-right: 1px solid #d8dae2; height: 13px; background: linear-gradient(#fff, #eef0f5); padding-left: 4px; }
    .list td { border: 0; height: 10px; line-height: 10px; }
    .list td:first-child { text-align: left; padding-left: 13px; }
    .list th:nth-child(2), .list td:nth-child(2) { padding-left: 8px; }
    .list tbody::before { content: ""; display: block; height: 2px; }
  `;
  lock() {
    return html`<svg viewBox="0 0 11 8"><path d="M.500 3.500h6.500v4H.500z" fill="#fff" stroke="#222"/><path d="M3.500 4.500v2" stroke="#222"/><path d="M6 3.500V2q.500-1.500 2.500-1.500T10.500 3" fill="none" stroke="#222"/></svg>`;
  }
  tick(k: string) {
    return k ? html`<svg viewBox="0 0 11 8"><path d="M1.500 4l2 2.500L8.500 1.500" fill="none" stroke=${k === "g" ? "#22cc33" : "#c01818"} stroke-width="2"/></svg>` : nothing;
  }
  cursor() {
    return html`<svg class="cursor" viewBox="0 0 6 9"><path d="M.500.500v7l1.700-1.500L3.500 8.500l1-.5-1-2.300h2z" fill="#1fa83a" stroke="#0d3b16" stroke-width=".8"/></svg>`;
  }
  render() {
    const tools = ["stack/B+sendR/g", "dash/b+bits/k", "stack/B", "eye/k+exS/r", "cell/k+refresh/g", "doc/w+under/g+check/g"];
    return html`
      <div class="caption"><span>Layer</span>
        <button aria-label="Blocca"><svg viewBox="0 0 7 8"><path d="M2.500 1.500h2.500v3h-2.500zM1.500 4.500h4.500M3.700 5v2.500" fill="none" stroke="#222"/></svg></button>
        <button aria-label="Chiudi"><svg viewBox="0 0 7 8"><path d="M1 1.500l5 5M6 1.500l-5 5" stroke="#111" stroke-width="1.500"/></svg></button></div>
      <div class="tabs" role="tablist"><button role="tab" class="t0" aria-selected="true">Layer</button><button role="tab" class="t1">Filtri</button><button role="tab" class="t2">Combinazioni</button></div>
      <div class="body">
        <div class="bar" role="toolbar">
          <button class="raised" aria-label="Visibilità"><tool-icon code="eye/p"></tool-icon></button>
          <button class="raised" aria-label="Cerca"><tool-icon code="lens/C+under/k"></tool-icon></button>
          <button class="drop" aria-label="Opzioni di ricerca"><span class="tri dn"></span></button>
          ${tools.map((t, i) => html`<button aria-label=${`Layer ${i + 1}`}><tool-icon code=${t}></tool-icon></button>`)}
          <button class="raised" aria-label="Mostra"><tool-icon code="cell/k+eye/G"></tool-icon></button>
          <button aria-label="Aggiorna"><tool-icon code="doc/w+refresh/b"></tool-icon></button>
        </div>
        <div class="tablebox">
          <div class="scroll"><table>
            <colgroup><col width="25"><col width="93"><col width="21"><col width="21"><col width="21"></colgroup>
            <thead><tr><th>Indice</th><th>Nome Layer</th><th></th><th></th><th></th></tr></thead>
            <tbody>${LAYERS.map(([n, name, k]) => html`<tr class=${classMap({ sel: n === 4 })}>
              <td>${n}</td><td>${name}</td><td class="pick">${n === 15 ? this.cursor() : nothing}</td><td class="ic">${this.lock()}</td><td class="ic">${this.tick(k)}</td></tr>`)}</tbody>
          </table></div>
          <div class="sb"><button aria-label="Su"><span class="tri up"></span></button>
            <div class="track"><div class="thumb"><span class="grip"></span></div></div>
            <button aria-label="Giù"><span class="tri dn"></span></button></div>
        </div>
        <div class="list"><table>
          <colgroup><col width="44"><col width="126"><col></colgroup>
          <thead><tr><th>Indice</th><th>Gruppo</th><th></th></tr></thead>
          <tbody><tr><td>0</td><td>SOTTO</td><td></td></tr><tr><td>1</td><td>SOPRA</td><td></td></tr></tbody>
        </table></div>
      </div>`;
  }
}

/* ---------- application frame ---------- */

const MENU = ["File", "Edita", "Wireframe", "Solidi", "Operazioni", "Modellazione", "Analisi", "Annotazioni", "Messa in Tavola", "Sistema", "Visualizza", "Lavorazioni", "?"];

@customElement("app-root")
class AppRoot extends LitElement {
  static styles = css`
    :host { display: flex; flex-direction: column; height: 100vh; overflow: hidden; background: #c3c6d6;
      font: 7px/10px Lato, "Open Sans", sans-serif; color: #08090c; }
    .title { display: flex; height: 13px; flex: none; align-items: flex-start; padding-left: 4px;
      background: linear-gradient(90deg, #a8bdd2, #9fb8d2 22%, #5f8dbd 32%, #41669f 45%, #2f4f8c 66%, #1d2f62 76%, #243463 82%, #1a2348 90%, #3a3c58); }
    .title h1 { flex: 1; margin: 0; font: inherit; line-height: 13px; white-space: nowrap; }
    .title button { height: 10px; padding: 0; border: 1px solid #737791; border-top: 0; background: linear-gradient(#b9bccb, #77799a); display: flex; align-items: center; justify-content: center; width: 15px; }
    .title .close { width: 31px; background: linear-gradient(#e08a78, #c23322 50%, #a82014); margin-right: 1px; border-radius: 0 0 3px 3px; }
    .title svg, .mdi svg { width: 9px; height: 7px; }
    .menu { display: flex; align-items: center; height: 12px; flex: none; padding-left: 1px; background: linear-gradient(#fdfdff, #e6e8f3); border-bottom: 1px solid #d0d3e0; box-sizing: border-box; }
    .menu .app { width: 9px; height: 10px; }
    .menu nav { display: flex; flex: 1; gap: 9px; }
    .menu a { color: inherit; text-decoration: none; white-space: nowrap; }
    .mdi { display: flex; gap: 2px; padding-right: 1px; }
    .mdi button { width: 10px; height: 9px; padding: 0; border: 1px solid #c4cad8; background: #eef2f8; display: flex; align-items: center; justify-content: center; }
    .bars { flex: none; height: 72px; background: linear-gradient(#e2e4f1, #cbcddd 55%, #aeb1c3); }
    .main { flex: 1; min-height: 0; display: flex; }
    .dock { flex: 1 0 14px; max-width: 14px; display: flex; flex-direction: column; align-items: center; background: linear-gradient(90deg, #d4dcec, #a9b2ca); padding-top: 2px; gap: 5px; }
    .dock span { writing-mode: vertical-rl; line-height: 9px; transform: rotate(180deg); }
    .status { display: flex; height: 12px; flex: none; align-items: center; padding-right: 2px; background: linear-gradient(#e6e8f2, #c4c7d4); }
    .status b, .hint span { flex: 1; white-space: nowrap; overflow: hidden; }
    .find { width: 75px; height: 10px; box-sizing: border-box; display: flex; background: #fff; align-items: center; padding-right: 1px; margin-right: 3px; }
    .find input { flex: 1; min-width: 0; border: 0; outline: 0; padding: 0; font: inherit; height: 9px; background: none; }
    .find svg { width: 7px; height: 8px; }
    .cell { height: 10px; box-sizing: border-box; white-space: nowrap; overflow: hidden; border-left: 1px solid #a3a7b8; padding-left: 2px; }
    .c1 { width: 61px; } .c2 { width: 65px; padding-left: 3px; } .c3 { width: 36px; padding-left: 3px; font-weight: 700; } .c4 { width: 16px; }
    .sw { width: 24px; height: 10px; box-sizing: border-box; border-left: 1px solid #a3a7b8; padding: 2px 2px; }
    .sw i { display: block; height: 6px; background: #4a6a96; }
    .status tool-icon { margin-left: 3px; width: 13px; }
    .hint { display: flex; height: 11px; flex: none; align-items: center; padding-right: 7px; background: linear-gradient(#a9acbb, #bcbfcc 40%, #b3b6c4); white-space: nowrap; }
    .hint button { border: 0; padding: 0; background: none; font: inherit; color: inherit; height: 10px; display: flex; justify-content: center; align-items: center; width: 17px; overflow: hidden; }
    .hint .inv { width: 21px; margin-right: 13px; }
    .hint svg, .hint button tool-icon { flex: none; }
    .hint output { display: block; }
    .ls { width: 66px; margin-left: 5px; } .un { width: 46px; } .x { width: 44px; } .y { width: 46px; color: #e02434; } .z { width: 41px; }
    .task { height: 4px; flex: none; display: flex; background: #08090d; padding-left: 8px; gap: 9px; }
    .task i { height: 4px; width: 32px; border-radius: 2px 2px 0 0; background: #56585c; }
    .task .orb { width: 6px; background: #6f93ad; margin-right: 42px; }
    .task .grn { width: 20px; background: #18a01c; margin-left: 4px; margin-right: 49px; }
    .task .blu { width: 14px; background: #3a4a68; margin-right: 11px; }
    .task .sky { width: 20px; background: #8c96c4; }
    .task .lit { background: #b5b6a8; }
  `;
  render() {
    const hints = ["cal/B", "exS/k+ex/r", "links/b", "exS/k+ex/r", "docs/S", "cube/o", "cell/r+ex/r", "sq/r+circS/G", "dot/k"];
    return html`
      <header class="title"><h1>VISI 20.0.09.13 - Vero Software x64 - STAMPO IMBUTITURA-SCUDO_MOTORE_V06-1PASSAGGIO.wkf - [Dinamico]</h1>
        <button aria-label="Riduci"><svg viewBox="0 0 9 7"><path d="M1.500 5h6" stroke="#fff" stroke-width="2"/></svg></button>
        <button aria-label="Ripristina"><svg viewBox="0 0 9 7"><path d="M1.500 2.500h4v3h-4zM3.500 1h4v3.500" fill="none" stroke="#fff"/></svg></button>
        <button class="close" aria-label="Esci"><svg viewBox="0 0 9 7"><path d="M2 1l5 5M7 1L2 6" stroke="#fff" stroke-width="1.600"/></svg></button>
      </header>
      <div class="menu"><svg class="app" viewBox="0 0 9 10"><path d="M0 8V4M2 9L4 2" stroke="#6d7787" stroke-width="1.500"/></svg>
        <nav>${MENU.map((m) => html`<a href="#">${m}</a>`)}</nav>
        <div class="mdi">
          <button aria-label="Riduci documento"><svg viewBox="0 0 9 7"><path d="M2.500 5.500h4" stroke="#456"/></svg></button>
          <button aria-label="Ripristina documento"><svg viewBox="0 0 9 7"><path d="M2 3h3v2.500H2zM4 1.500h3V4" fill="none" stroke="#456"/></svg></button>
          <button aria-label="Chiudi documento"><svg viewBox="0 0 9 7"><path d="M2.500 1.500l4 4M6.500 1.500l-4 4" stroke="#456"/></svg></button>
        </div></div>
      <div class="bars">${TOOLBARS.map((g) => html`<tool-strip .groups=${g}></tool-strip>`)}</div>
      <div class="main">
        <side-palette></side-palette><model-view></model-view><layer-panel></layer-panel>
        <aside class="dock"><tool-icon code="stack/B+lens/b"></tool-icon><span>Layer</span></aside>
      </div>
      <div class="status"><b>ambia attributi</b>
        <label class="find"><input aria-label="Cerca comando"><svg viewBox="0 0 7 8"><circle cx="4" cy="3.500" r="2" fill="none" stroke="#667"/><path d="M2.500 5L.500 7.500" stroke="#667"/></svg></label>
        <span class="cell c1">Assoluto XY Piant</span><span class="cell c2">VISTA ASSOLUTA</span><span class="cell c3">TAPPO</span><span class="cell c4"></span>
        <span class="sw"><i></i></span><span class="sw"><i></i></span><span class="sw"><i></i></span><tool-icon code="ball/B+tip/C"></tool-icon></div>
      <div class="hint"><span>eleziona gli elementi</span><button class="inv">Inverti</button>
        ${hints.map((h, i) => html`<button aria-label=${`Filtro ${i + 1}`}><tool-icon code=${h}></tool-icon></button>`)}
        <output class="ls">LS: 1.00 PS: 1.00</output><output class="un">Unità: MM</output>
        <output class="x">X = 0147.552</output><output class="y">Y = -0263.162</output><output class="z">Z = 0000.000</output></div>
      <footer class="task"><i class="orb"></i><i></i><i class="grn"></i><i class="blu"></i><i class="sky"></i><i></i><i class="lit"></i></footer>`;
  }
}
